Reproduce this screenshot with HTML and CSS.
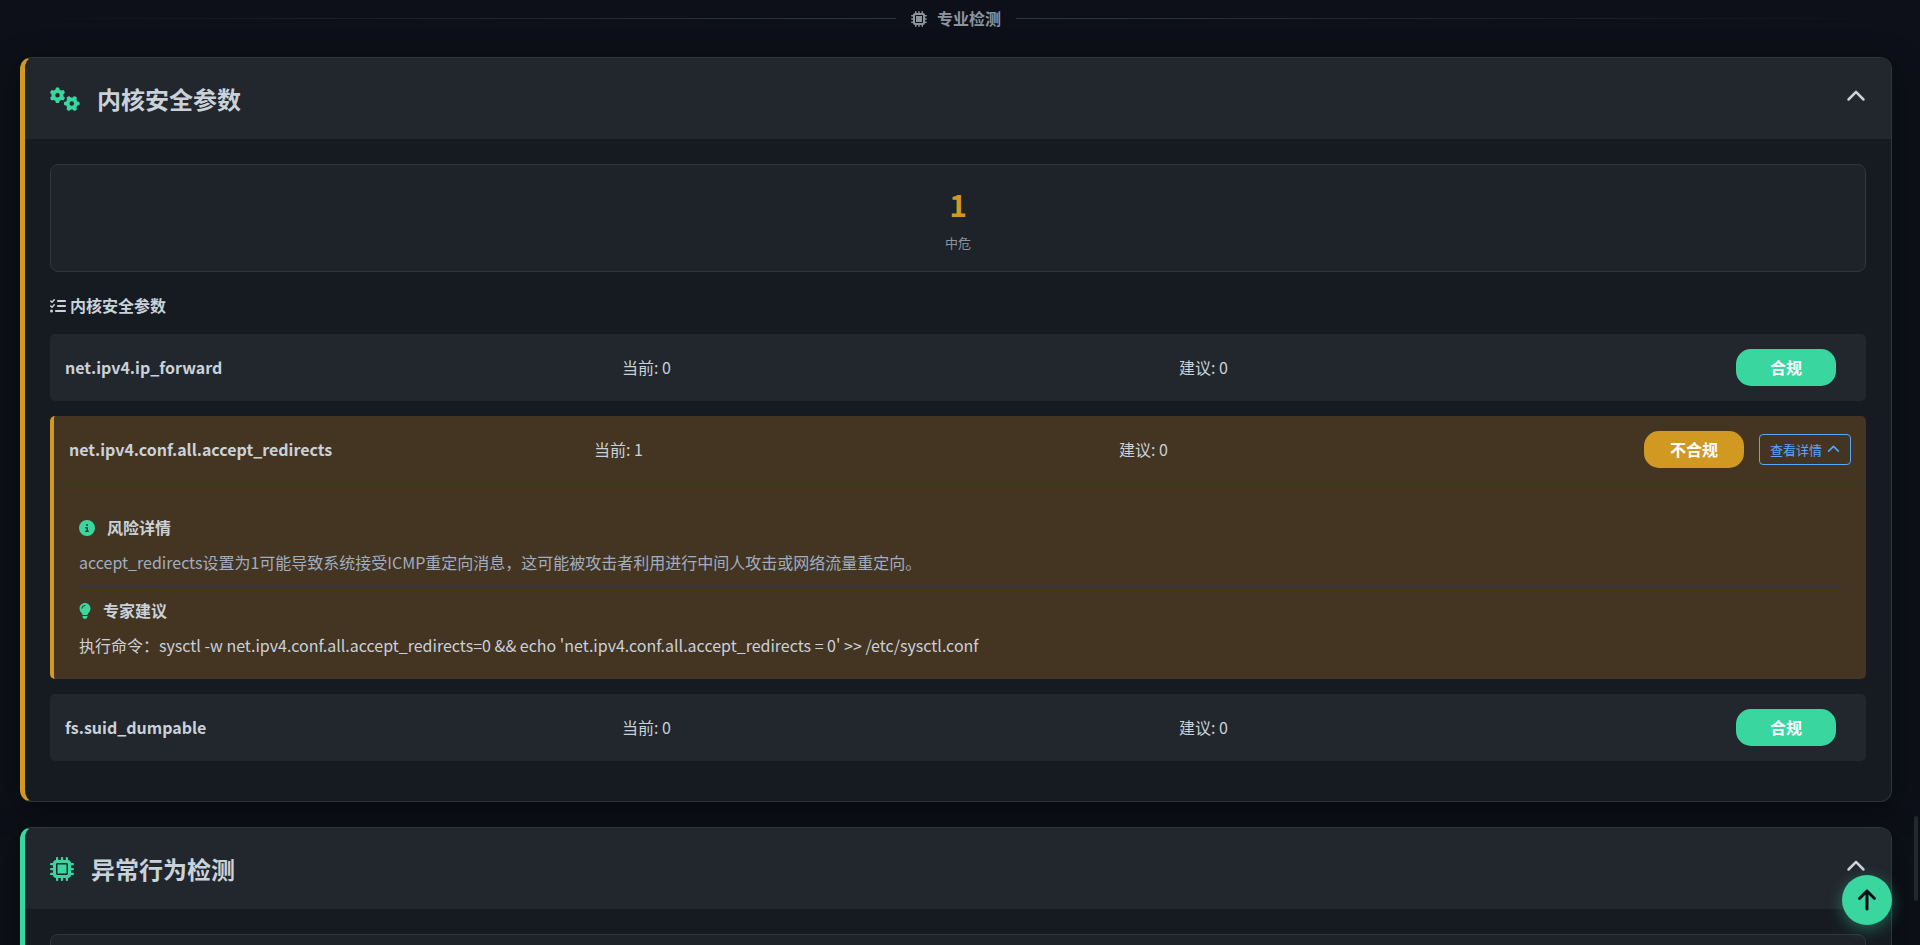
FILE: index.html
```html
<!DOCTYPE html>
<html lang="zh-CN">
<head>
    <meta charset="UTF-8">
    <meta name="viewport" content="width=device-width, initial-scale=1.0">
    <title>专业检测</title>
    <link rel="stylesheet" href="styles.css">
</head>
<body>
    <svg class="icon-defs" aria-hidden="true">
        <symbol id="microchip" viewBox="0 0 512 512">
            <path d="M176 24c0-13.3-10.7-24-24-24s-24 10.7-24 24V64c-35.3 0-64 28.7-64 64H24c-13.3 0-24 10.7-24 24s10.7 24 24 24H64v56H24c-13.3 0-24 10.7-24 24s10.7 24 24 24H64v56H24c-13.3 0-24 10.7-24 24s10.7 24 24 24H64c0 35.3 28.7 64 64 64v40c0 13.3 10.7 24 24 24s24-10.7 24-24V448h56v40c0 13.3 10.7 24 24 24s24-10.7 24-24V448h56v40c0 13.3 10.7 24 24 24s24-10.7 24-24V448c35.3 0 64-28.7 64-64h40c13.3 0 24-10.7 24-24s-10.7-24-24-24H448V280h40c13.3 0 24-10.7 24-24s-10.7-24-24-24H448V176h40c13.3 0 24-10.7 24-24s-10.7-24-24-24H448c0-35.3-28.7-64-64-64V24c0-13.3-10.7-24-24-24s-24 10.7-24 24V64H280V24c0-13.3-10.7-24-24-24s-24 10.7-24 24V64H176V24zM160 128H352c17.7 0 32 14.3 32 32V352c0 17.7-14.3 32-32 32H160c-17.7 0-32-14.3-32-32V160c0-17.7 14.3-32 32-32zm192 32H160V352H352V160z"/>
        </symbol>
        <symbol id="gears" viewBox="0 0 640 512">
            <path id="gear" d="M308.5 135.3c7.1-6.3 9.9-16.2 6.2-25c-2.3-5.3-4.8-10.5-7.6-15.5L304 89.4c-3-5-6.3-9.9-9.8-14.6c-5.7-7.6-15.7-10.1-24.7-7.1l-28.2 9.3c-10.7-8.8-23-16-36.2-20.9L199 27.1c-1.9-9.3-9.1-16.7-18.5-17.8C173.9 8.4 167.2 8 160.4 8h-.7c-6.8 0-13.5 .4-20.1 1.2c-9.4 1.1-16.6 8.6-18.5 17.8L115 56.1c-13.3 5-25.5 12.1-36.2 20.9L50.5 67.8c-9-3-19-.5-24.7 7.1c-3.5 4.7-6.8 9.6-9.9 14.6l-3 5.3c-2.8 5-5.3 10.2-7.6 15.6c-3.7 8.7-.9 18.6 6.2 25l22.2 19.8C32.6 161.9 32 168.9 32 176s.6 14.1 1.7 20.9L11.5 216.7c-7.1 6.3-9.9 16.2-6.2 25c2.3 5.3 4.8 10.5 7.6 15.6l3 5.2c3 5.1 6.3 9.9 9.9 14.6c5.7 7.6 15.7 10.1 24.7 7.1l28.2-9.3c10.7 8.8 23 16 36.2 20.9l6.1 29.1c1.9 9.3 9.1 16.7 18.5 17.8c6.7 .8 13.5 1.2 20.4 1.2s13.7-.4 20.4-1.2c9.4-1.1 16.6-8.6 18.5-17.8l6.1-29.1c13.3-5 25.5-12.1 36.2-20.9l28.2 9.3c9 3 19 .5 24.7-7.1c3.5-4.7 6.8-9.5 9.8-14.6l3.1-5.4c2.8-5 5.3-10.2 7.6-15.5c3.7-8.7 .9-18.6-6.2-25l-22.2-19.8c1.1-6.8 1.7-13.8 1.7-20.9s-.6-14.1-1.7-20.9l22.2-19.8zM112 176a48 48 0 1 1 96 0 48 48 0 1 1 -96 0z"/>
            <use href="#gear" transform="translate(464 352) rotate(90) translate(-160 -176)"/>
        </symbol>
        <symbol id="chevron-up" viewBox="0 0 512 512">
            <path d="M233.4 105.4c12.5-12.5 32.8-12.5 45.3 0l192 192c12.5 12.5 12.5 32.8 0 45.3s-32.8 12.5-45.3 0L256 173.3 86.6 342.6c-12.5 12.5-32.8 12.5-45.3 0s-12.5-32.8 0-45.3l192-192z"/>
        </symbol>
        <symbol id="list-check" viewBox="0 0 512 512">
            <path d="M152.1 38.2c9.9 8.9 10.7 24 1.8 33.9l-72 80c-4.4 4.9-10.6 7.8-17.2 7.9s-12.9-2.4-17.6-7L7 113C-2.3 103.6-2.3 88.4 7 79s24.6-9.4 33.9 0l22.1 22.1 55.1-61.2c8.9-9.9 24-10.7 33.9-1.8zm0 160c9.9 8.9 10.7 24 1.8 33.9l-72 80c-4.4 4.9-10.6 7.8-17.2 7.9s-12.9-2.4-17.6-7L7 273c-9.4-9.4-9.4-24.6 0-33.9s24.6-9.4 33.9 0l22.1 22.1 55.1-61.2c8.9-9.9 24-10.7 33.9-1.8zM224 96c0-17.7 14.3-32 32-32H480c17.7 0 32 14.3 32 32s-14.3 32-32 32H256c-17.7 0-32-14.3-32-32zm0 160c0-17.7 14.3-32 32-32H480c17.7 0 32 14.3 32 32s-14.3 32-32 32H256c-17.7 0-32-14.3-32-32zM160 416c0-17.7 14.3-32 32-32H480c17.7 0 32 14.3 32 32s-14.3 32-32 32H192c-17.7 0-32-14.3-32-32zM48 368a48 48 0 1 1 0 96 48 48 0 1 1 0-96z"/>
        </symbol>
        <symbol id="circle-info" viewBox="0 0 512 512">
            <path d="M256 512A256 256 0 1 0 256 0a256 256 0 1 0 0 512zM216 336h24V272H216c-13.3 0-24-10.7-24-24s10.7-24 24-24h48c13.3 0 24 10.7 24 24v88h8c13.3 0 24 10.7 24 24s-10.7 24-24 24H216c-13.3 0-24-10.7-24-24s10.7-24 24-24zm40-208a32 32 0 1 1 0 64 32 32 0 1 1 0-64z"/>
        </symbol>
        <symbol id="lightbulb" viewBox="0 0 384 512">
            <path d="M272 384c9.6-31.9 29.5-59.1 49.2-86.2l0 0c5.2-7.1 10.4-14.2 15.4-21.4c19.8-28.5 31.4-63 31.4-100.3C368 78.8 289.2 0 192 0S16 78.8 16 176c0 37.3 11.6 71.9 31.4 100.3c5 7.2 10.2 14.3 15.4 21.4l0 0c19.8 27.1 39.7 54.4 49.2 86.2H272zM192 512c44.2 0 80-35.8 80-80V416H112v16c0 44.2 35.8 80 80 80zM112 176c0 8.8-7.2 16-16 16s-16-7.2-16-16c0-61.9 50.1-112 112-112c8.8 0 16 7.2 16 16s-7.2 16-16 16c-44.2 0-80 35.8-80 80z"/>
        </symbol>
        <symbol id="arrow-up" viewBox="0 0 384 512">
            <path d="M214.6 41.4c-12.5-12.5-32.8-12.5-45.3 0l-160 160c-12.5 12.5-12.5 32.8 0 45.3s32.8 12.5 45.3 0L160 141.2V448c0 17.7 14.3 32 32 32s32-14.3 32-32V141.2L329.4 246.6c12.5 12.5 32.8 12.5 45.3 0s12.5-32.8 0-45.3l-160-160z"/>
        </symbol>
    </svg>

    <main class="container">
        <div class="category-divider">
            <svg class="icon"><use href="#microchip"/></svg>
            <span>专业检测</span>
        </div>

        <section class="card card-warning">
            <div class="card-header">
                <svg class="icon icon-title icon-wide"><use href="#gears"/></svg>
                <h2>内核安全参数</h2>
                <button class="toggle" type="button" aria-label="收起">
                    <svg class="icon"><use href="#chevron-up"/></svg>
                </button>
            </div>
            <div class="card-body">
                <div class="summary">
                    <div class="summary-number">1</div>
                    <div class="summary-label">中危</div>
                </div>

                <h3 class="list-title">
                    <svg class="icon"><use href="#list-check"/></svg>
                    <span>内核安全参数</span>
                </h3>

                <div class="param">
                    <div class="param-row">
                        <strong class="param-name">net.ipv4.ip_forward</strong>
                        <span>当前: 0</span>
                        <span>建议: 0</span>
                        <span class="status status-ok">合规</span>
                        <span></span>
                    </div>
                </div>

                <div class="param param-bad">
                    <div class="param-row">
                        <strong class="param-name">net.ipv4.conf.all.accept_redirects</strong>
                        <span>当前: 1</span>
                        <span>建议: 0</span>
                        <span class="status status-bad">不合规</span>
                        <button class="detail-btn" type="button">
                            查看详情
                            <svg class="icon"><use href="#chevron-up"/></svg>
                        </button>
                    </div>
                    <div class="detail">
                        <div class="detail-block">
                            <h4>
                                <svg class="icon"><use href="#circle-info"/></svg>
                                风险详情
                            </h4>
                            <p class="risk">accept_redirects设置为1可能导致系统接受ICMP重定向消息，这可能被攻击者利用进行中间人攻击或网络流量重定向。</p>
                        </div>
                        <div class="detail-block">
                            <h4>
                                <svg class="icon icon-narrow"><use href="#lightbulb"/></svg>
                                专家建议
                            </h4>
                            <p>执行命令：sysctl -w net.ipv4.conf.all.accept_redirects=0 &amp;&amp; echo 'net.ipv4.conf.all.accept_redirects = 0' &gt;&gt; /etc/sysctl.conf</p>
                        </div>
                    </div>
                </div>

                <div class="param">
                    <div class="param-row">
                        <strong class="param-name">fs.suid_dumpable</strong>
                        <span>当前: 0</span>
                        <span>建议: 0</span>
                        <span class="status status-ok">合规</span>
                        <span></span>
                    </div>
                </div>
            </div>
        </section>

        <section class="card card-safe">
            <div class="card-header">
                <svg class="icon icon-title"><use href="#microchip"/></svg>
                <h2>异常行为检测</h2>
                <button class="toggle" type="button" aria-label="收起">
                    <svg class="icon"><use href="#chevron-up"/></svg>
                </button>
            </div>
            <div class="card-body">
                <div class="summary"></div>
            </div>
        </section>
    </main>

    <button class="back-top" type="button" aria-label="返回顶部">
        <svg class="icon icon-narrow"><use href="#arrow-up"/></svg>
    </button>
    <div class="scroll-thumb"></div>
</body>
</html>
```

FILE: styles.css
```css
:root{
    --bg: #0d1117;
    --card: #161b22;
    --panel: #22262d;
    --border: #30363d;
    --text: #c9d1d9;
    --muted: #8b949e;
    --green: #3ad6a0;
    --orange: #d29922;
    --blue: #58a6ff;
}
*{
    margin: 0;
    padding: 0;
    box-sizing: border-box;
}
body{
    height: 100vh;
    overflow: hidden;
    background: #0d1018;
    color: var(--text);
    font-family: "Noto Sans CJK SC", sans-serif;
    font-size: 16px;
    line-height: 27px;
}
button{
    font-family: inherit;
    cursor: pointer;
}
.icon-defs{
    display: none;
}
.icon{
    width: 1em;
    height: 1em;
    fill: currentColor;
    flex-shrink: 0;
}
.icon-wide{
    width: 30px;
}
.icon-narrow{
    width: 12px;
}
.container{
    padding: 5px 28px 0 20px;
}

/* divider */
.category-divider{
    display: flex;
    align-items: center;
    gap: 10px;
    color: var(--muted);
    font-weight: 700;
    margin-bottom: 25px;
}
.category-divider::before,
.category-divider::after{
    content: "";
    flex: 1;
    height: 1px;
    background: linear-gradient(to right, transparent, var(--border));
    margin-right: 5px;
}
.category-divider::after{
    background: linear-gradient(to left, transparent, var(--border));
    margin: 0 0 0 5px;
}

/* card */
.card{
    background: var(--card);
    border: 1px solid var(--border);
    border-left: 5px solid var(--green);
    border-radius: 12px;
    margin-bottom: 25px;
    overflow: hidden;
    box-shadow: 0 8px 32px rgba(0, 0, 0, 0.4);
}
.card-warning{
    border-left-color: var(--orange);
}
.card-header{
    display: flex;
    align-items: center;
    gap: 17px;
    padding: 20px 25px;
    background: var(--panel);
}
.card-header h2{
    flex: 1;
    font-size: 24px;
    font-weight: 700;
    line-height: 41px;
}
.icon-title{
    font-size: 24px;
    color: var(--green);
}
.toggle{
    display: flex;
    background: none;
    border: none;
    color: var(--text);
    font-size: 20px;
    padding-bottom: 4px;
}
.card-body{
    padding: 25px;
}

/* summary */
.summary{
    background: #1e2229;
    border: 1px solid var(--border);
    border-radius: 8px;
    padding: 15px;
    min-height: 108px;
    text-align: center;
    margin-bottom: 20px;
}
.summary-number{
    color: var(--orange);
    font-size: 30px;
    font-weight: 700;
    line-height: 48px;
}
.summary-label{
    color: var(--muted);
    font-size: 13px;
    line-height: 22px;
    margin-top: 4px;
}
.list-title{
    display: flex;
    align-items: center;
    gap: 4px;
    font-size: 16px;
    margin-bottom: 15px;
}

/* params */
.param{
    background: var(--panel);
    border-radius: 5px;
    margin-bottom: 15px;
}
.param-bad{
    background: #443422;
    border-left: 4px solid var(--orange);
}
.param-row{
    display: grid;
    grid-template-columns: 1fr 1fr 1fr 100px auto;
    align-items: center;
    gap: 15px;
    padding: 15px;
}
.param-name{
    font-weight: 600;
}
.status{
    color: #fff;
    font-weight: 700;
    text-align: center;
    padding: 5px;
    border-radius: 15px;
}
.status-ok{
    background: var(--green);
}
.status-bad{
    background: var(--orange);
}
.detail-btn{
    display: flex;
    align-items: center;
    gap: 5px;
    font-size: 13px;
    color: var(--blue);
    background: none;
    border: 1px solid var(--blue);
    border-radius: 4px;
    padding: 5px 10px;
}
.detail{
    border-top: 1px solid var(--border);
    padding: 20px 25px;
}
.detail-block{
    padding-top: 10px;
}
.detail-block + .detail-block{
    border-top: 1px solid var(--border);
    margin-top: 10px;
}
.detail h4{
    display: flex;
    align-items: center;
    gap: 12px;
    font-size: 16px;
    margin-bottom: 8px;
}
.detail h4 .icon{
    color: var(--green);
}
.risk{
    color: #a0aec0;
}

/* floating */
.back-top{
    position: fixed;
    right: 28px;
    bottom: 20px;
    width: 50px;
    height: 50px;
    display: flex;
    align-items: center;
    justify-content: center;
    border: none;
    border-radius: 50%;
    background: var(--green);
    color: var(--bg);
    font-size: 24px;
    box-shadow: 0 4px 15px rgba(58, 214, 160, 0.4);
}
.back-top .icon{
    width: 18px;
}
.scroll-thumb{
    position: fixed;
    right: 2px;
    top: 816px;
    width: 4px;
    height: 85px;
    border-radius: 2px;
    background: var(--panel);
}
```
